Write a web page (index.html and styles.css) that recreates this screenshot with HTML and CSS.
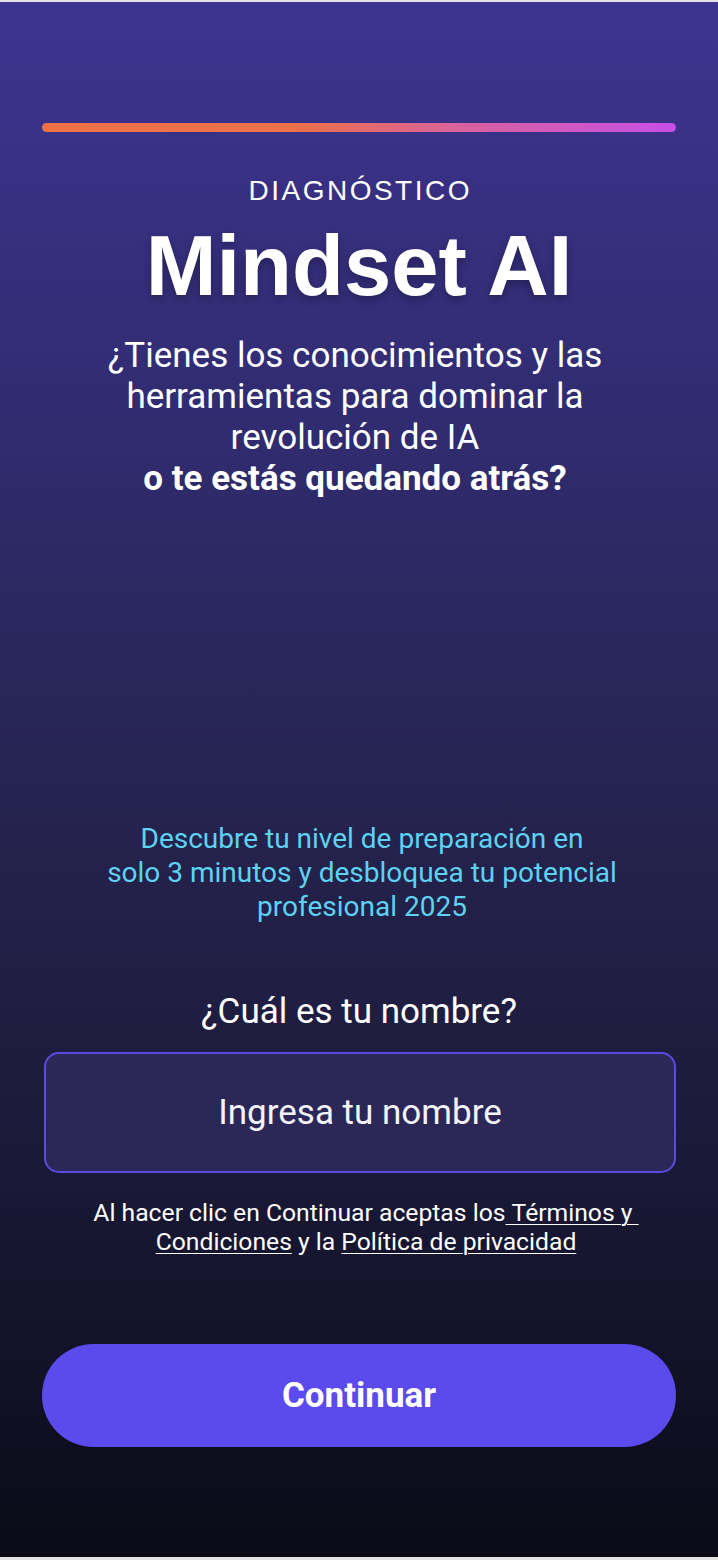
FILE: index.html
```html
<!DOCTYPE html>
<html lang="es">
<head>
<meta charset="utf-8">
<title>Mindset AI</title>
<link rel="stylesheet" href="styles.css">
</head>
<body>
<main class="app">
  <div class="progress"></div>
  <p class="eyebrow">DIAGNÓSTICO</p>
  <h1 class="title">Mindset AI</h1>
  <p class="lead">¿Tienes los conocimientos y las<br>herramientas para dominar la<br>revolución de IA<br><strong>o te estás quedando atrás?</strong></p>
  <div class="spacer"></div>
  <p class="promo">Descubre tu nivel de preparación en<br>solo 3 minutos y desbloquea tu potencial<br>profesional 2025</p>
  <label class="question" for="name">¿Cuál es tu nombre?</label>
  <input class="name-input" id="name" type="text" placeholder="Ingresa tu nombre">
  <p class="terms">Al hacer clic en Continuar aceptas los<a href="#">&nbsp;Términos y&nbsp;</a><br><a href="#">Condiciones</a> y la <a href="#">Política de privacidad</a></p>
  <button class="cta" type="button">Continuar</button>
</main>
</body>
</html>
```

FILE: styles.css
```css
* { box-sizing: border-box; }
html, body { margin: 0; padding: 0; }
body {
  background: #e4e4e4;
  padding-top: 2px;
  font-family: Roboto, "Liberation Sans", sans-serif;
  color: #ffffff;
}
.app {
  height: 1555px;
  display: flex;
  flex-direction: column;
  align-items: stretch;
  padding: 121px 42px 0;
  background: linear-gradient(180deg, #3d3491 0%, #2f2b6c 30%, #24224b 55%, #1a1937 75%, #0b0a17 100%);
  text-align: center;
}
.progress {
  height: 9px;
  border-radius: 5px;
  background: linear-gradient(90deg, #ee7146 0%, #ec7049 40%, #d9639a 65%, #c64fe8 100%);
}
.eyebrow {
  margin: 42px 0 0;
  font-family: "Liberation Sans", Arial, sans-serif;
  font-size: 28px;
  line-height: 34px;
  letter-spacing: 2.5px;
  padding-left: 2.5px;
  font-weight: 400;
}
.title {
  margin: 16px 0 0;
  font-family: "Liberation Sans", Arial, sans-serif;
  font-weight: 700;
  font-size: 85px;
  line-height: 84px;
  letter-spacing: 0;
  text-shadow: 0 4px 10px rgba(0, 0, 0, 0.3);
}
.lead {
  margin: 27px 0 0;
  padding-right: 8px;
  font-size: 35px;
  line-height: 41px;
  font-weight: 400;
}
.lead strong { font-weight: 700; }
.spacer { height: 323px; }
.promo {
  margin: 0;
  padding-left: 6px;
  font-size: 28px;
  line-height: 34px;
  color: #5dd2f1;
}
.question {
  display: block;
  margin-top: 67px;
  font-size: 35px;
  line-height: 41px;
}
.name-input {
  margin: 20px 0 0 2px;
  height: 121px;
  width: calc(100% - 2px);
  border: 2px solid #5a4ae0;
  border-radius: 15px;
  background: #2b2858;
  color: #ffffff;
  font-family: Roboto, sans-serif;
  font-size: 35px;
  text-align: center;
  outline: none;
}
.name-input::placeholder { color: #f4f4f8; opacity: 1; }
.terms {
  margin: 25px 0 0;
  padding-left: 14px;
  font-size: 24.7px;
  line-height: 29px;
}
.terms a {
  color: #ffffff;
  text-decoration: underline;
  text-decoration-thickness: 1px;
  text-underline-offset: 3px;
}
.cta {
  margin-top: 88px;
  height: 103px;
  border: none;
  border-radius: 52px;
  background: #5b4aec;
  color: #ffffff;
  font-family: Roboto, sans-serif;
  font-weight: 700;
  font-size: 35px;
}
```
